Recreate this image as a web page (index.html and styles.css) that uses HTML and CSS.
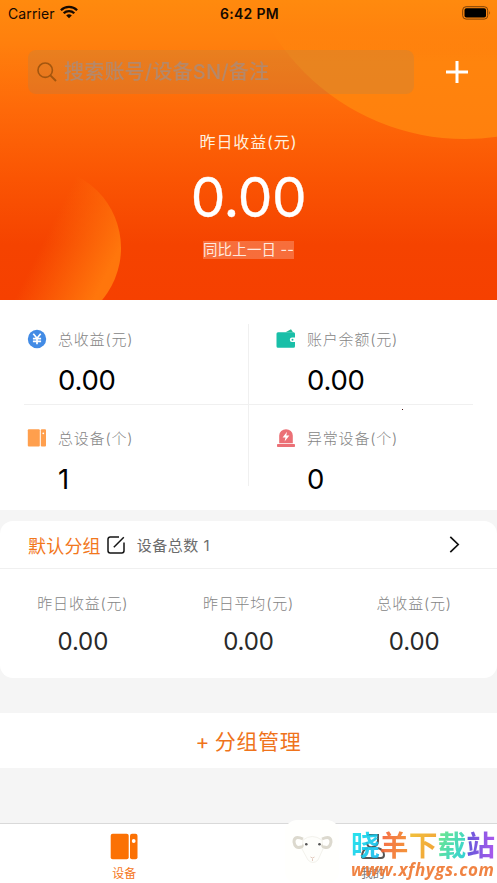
FILE: index.html
```html
<!DOCTYPE html>
<html lang="zh-CN">
<head>
<meta charset="utf-8">
<title>设备</title>
<link rel="stylesheet" href="styles.css">
</head>
<body>
<div class="app">
  <header class="hero">
    <svg class="hero-art" viewBox="0 0 497 300" aria-hidden="true">
      <defs>
        <linearGradient id="big" gradientUnits="userSpaceOnUse" x1="0" y1="20" x2="0" y2="139"><stop offset="0" stop-color="#ff840d" stop-opacity="0"/><stop offset=".35" stop-color="#ff840d"/><stop offset="1" stop-color="#ff800d"/></linearGradient>
        <linearGradient id="small" gradientUnits="userSpaceOnUse" x1="48" y1="232" x2="112" y2="264"><stop offset="0" stop-color="#ff760c" stop-opacity="0"/><stop offset="1" stop-color="#ff760c"/></linearGradient>
      </defs>
      <circle cx="465" cy="-88" r="227" fill="url(#big)"/>
      <circle cx="40" cy="248" r="81" fill="url(#small)"/>
    </svg>
    <div class="status">
      <div class="carrier"><span>Carrier</span>
        <svg width="18" height="14" viewBox="0 0 18 14" fill="none" stroke="#160900" stroke-width="2.3"><path d="M.9 5.2a11.6 11.6 0 0 1 16.2 0M3.7 8.2a7.6 7.6 0 0 1 10.6 0"/><path d="M9 13.3 6.2 10.5a4 4 0 0 1 5.6 0z" fill="#160900" stroke="none"/></svg>
      </div>
      <b class="clock">6:42 PM</b>
      <svg class="battery" width="29" height="14" viewBox="0 0 29 14"><rect x=".7" y=".7" width="25" height="12.4" rx="3.4" fill="none" stroke="#7d4108"/><rect x="2.5" y="2.3" width="21.5" height="9.2" rx="1.8"/><path d="M27.3 4.8q1.5 2 0 4z" fill="#7d4108"/></svg>
    </div>
    <div class="search-row">
      <div class="search">
        <svg width="20" height="20" viewBox="0 0 20 20" fill="none" stroke="#a3560f" stroke-width="1.6"><circle cx="8.200" cy="8.200" r="7.200"/><path d="m13.400 13.400 5.600 5.600" stroke-width="2"/></svg>
        <span>搜索账号/设备SN/备注</span>
      </div>
      <svg class="add" width="22" height="22" viewBox="0 0 22 22" stroke="#fff" stroke-width="3"><path d="M11 0v22M0 11h22"/></svg>
    </div>
    <div class="income-label">昨日收益(元)</div>
    <div class="income">0.00</div>
    <div class="compare"><span>同比上一日 --</span></div>
  </header>

  <section class="stats">
    <div class="stat">
      <svg viewBox="0 0 20 20"><circle cx="10" cy="10" r="9.200" fill="#428be5"/><path d="m6.300 4.800 3.700 4.400 3.700-4.400M10 9v6.300M5.900 9.700h8.200M5.900 12.300h8.200" fill="none" stroke="#fff" stroke-width="1.700"/></svg>
      <div><span class="stat-label">总收益(元)</span><div class="stat-value">0.00</div></div>
    </div>
    <div class="stat">
      <svg viewBox="0 0 20 20"><path d="M9.500 3.200 15 .3l2 2.900z" fill="#22b996"/><path d="M2 3.300h15.500a1.500 1.500 0 0 1 1.500 1.500v3.700h-3a2.200 2.200 0 0 0 0 4.400h3v4.300a1.500 1.500 0 0 1-1.500 1.500H2A1.500 1.500 0 0 1 .5 17.200V4.800A1.500 1.500 0 0 1 2 3.300z" fill="#19bfa8"/><circle cx="16.500" cy="10.700" r="1" fill="#19bfa8"/></svg>
      <div><span class="stat-label">账户余额(元)</span><div class="stat-value">0.00</div></div>
    </div>
    <div class="stat">
      <svg viewBox="0 0 20 20" fill="#ff9f4d"><rect x=".8" y="1.300" width="12" height="17.200" rx="1"/><rect x="13.800" y="1.300" width="5.200" height="17.200" rx="1"/><circle cx="16.300" cy="5.300" r=".9" fill="#fff"/></svg>
      <div><span class="stat-label">总设备(个)</span><div class="stat-value">1</div></div>
    </div>
    <div class="stat">
      <svg viewBox="0 0 20 20"><path d="M3.200 15.300V7.500a6.800 6.300 0 0 1 13.600 0v7.800z" fill="#eb7076"/><rect x="1" y="16" width="18" height="3" rx=".8" fill="#eb7076"/><path d="M11 3.800 6.600 9.500h2.900l-.9 3.900 4.800-5.900h-3.100z" fill="#fff"/></svg>
      <div><span class="stat-label">异常设备(个)</span><div class="stat-value">0</div></div>
    </div>
    <i class="speck"></i>
  </section>

  <section class="group">
    <div class="group-head">
      <span class="group-name">默认分组</span>
      <svg class="edit" width="18" height="18" viewBox="0 0 18 18" fill="none" stroke="#151515" stroke-width="1.500"><path d="M12 1H3.200A2.200 2.200 0 0 0 1 3.200v11.600A2.200 2.200 0 0 0 3.200 17h11.600a2.200 2.200 0 0 0 2.200-2.200V6.500M6.800 11.200 16.800 1.200"/></svg>
      <span class="group-count">设备总数 1</span>
      <svg class="chevron" width="11" height="17" viewBox="0 0 11 17" fill="none" stroke="#111" stroke-width="1.700"><path d="m1.300.9 7.900 7.600-7.900 7.600"/></svg>
    </div>
    <div class="group-data">
      <div><span class="data-label">昨日收益(元)</span><div class="data-value">0.00</div></div>
      <div><span class="data-label">昨日平均(元)</span><div class="data-value">0.00</div></div>
      <div><span class="data-label">总收益(元)</span><div class="data-value">0.00</div></div>
    </div>
  </section>

  <div class="manage">+ 分组管理</div>

  <nav class="tabs">
    <div class="tab active">
      <svg width="28" height="27" viewBox="0 0 28 27"><rect x=".7" y=".8" width="18" height="25.500" rx="2" fill="#fb7104"/><rect x="20" y=".8" width="7.500" height="25.500" rx="2" fill="#fb7104"/><circle cx="23.700" cy="8" r="1.900" fill="#fff"/></svg>
      <span>设备</span>
    </div>
    <div class="tab">
      <svg width="28" height="27" viewBox="0 0 28 27" fill="none" stroke="#555" stroke-width="2"><path d="M8 2h11v6q0 5-5.500 6T8 9M9 15q-6 1-6 9 0 1 2 1h17q3 0 3-3 0-5-6-7"/></svg>
      <span>我的</span>
    </div>
  </nav>

  <div class="mark">
    <svg width="56" height="63" viewBox="0 0 56 63"><rect x="1" width="54" height="63" rx="12" fill="#fffffd"/><path d="M19 20q9-7 19 0l1 9-5 11q-5 5-10 0l-6-11z" fill="#fefefb" stroke="#f3f2ec"/><g fill="none" stroke="#dcd9ce" stroke-width="3"><path d="M19 19q-9-4-9 3 1 7 7 5 2-1 1-2"/><path d="M38 19q9-4 9 3-1 7-7 5-2-1-1-2"/></g><circle cx="22.300" cy="24.300" r="1.300" fill="#555"/><circle cx="35.500" cy="24.300" r="1.300" fill="#555"/><path d="M26.500 37q2 2 4 0M28.500 38.500v2.500" fill="none" stroke="#e2cabe"/></svg>
    <div class="mark-text">
      <div class="mark-name"><span class="c1">晓</span><span class="c2">羊</span><span class="c3">下</span><span class="c4">载</span><span class="c5">站</span></div>
      <div class="mark-url">www.xfhygs.com</div>
    </div>
  </div>
</div>
</body>
</html>
```
FILE: styles.css
```css
* { box-sizing: border-box; }
body { margin: 0; font-family: Inter, "Noto Sans CJK SC", sans-serif; background: #f5f5f5; }
svg { display: block; flex: none; }
.app { position: relative; width: 497px; height: 883px; overflow: hidden; display: flex; flex-direction: column; }

.hero { position: relative; height: 300px; flex: none; overflow: hidden; color: #fff; background: linear-gradient(180deg, #ff8a0e 0, #ff800d 42px, #fe6909 110px, #fa5503 178px, #f54300 245px, #f64000 300px); }
.hero-art { position: absolute; inset: 0; width: 497px; height: 300px; }
.hero > div { position: relative; }
.status { height: 26px; padding: 0 6px 0 8px; display: grid; grid-template-columns: 1fr auto 1fr; align-items: center; color: #160900; }
.carrier { display: flex; align-items: center; gap: 6px; font-size: 14px; letter-spacing: .1px; }
.carrier svg { margin: -3px 0 0 -1px; }
.clock { font-size: 14px; font-weight: 600; letter-spacing: .3px; }
.battery { justify-self: end; margin-top: -1px; }
.search-row { margin-top: 24px; padding: 0 28px; display: flex; align-items: center; justify-content: space-between; }
.search { width: 386px; height: 44px; border-radius: 8px; background: rgba(143, 135, 105, .2); padding: 0 9px; display: flex; align-items: center; gap: 7px; }
.search span { font-size: 20px; font-weight: 500; line-height: 44px; color: #b5886a; letter-spacing: .2px; filter: blur(.6px); white-space: nowrap; }
.add { margin-right: 1px; }
.income-label { margin-top: 36px; height: 24px; line-height: 24px; text-align: center; font-size: 16px; letter-spacing: .9px; color: #fff0df; }
.income { margin-top: 18px; height: 52px; line-height: 50px; text-align: center; font-size: 55px; letter-spacing: -.4px; font-weight: 400; -webkit-text-stroke: .3px #fff; }
.compare { margin-top: 17px; display: flex; justify-content: center; font-size: 14.500px; letter-spacing: .15px; }
.compare span { height: 18px; line-height: 17px; background: rgba(255, 255, 255, .23); color: #ffe9df; white-space: nowrap; }

.stats { position: relative; flex: none; height: 210px; padding: 6px 24px 0; display: grid; grid-template-columns: 225px 224px; grid-template-rows: 99px 98px; background: #fff; }
.stat { display: flex; gap: 11px; padding: 23px 0 0 3px; }
.stat > svg { width: 20px; height: 20px; }
.stat:nth-child(2), .stat:nth-child(4) { padding-left: 27px; }
.stat:nth-child(-n+2) { border-bottom: 1px solid #f0f0f0; }
.stat:nth-child(odd) { background: linear-gradient(#f0f0f0, #f0f0f0) right 18px / 1px 100% no-repeat; }
.stat:nth-child(3) { background-position: right -17px; }
.stat-label { display: block; height: 21px; line-height: 21px; font-size: 15px; letter-spacing: .8px; font-weight: 300; color: #858585; white-space: nowrap; }
.stat-value { margin-top: 14px; line-height: 32px; font-size: 27.500px; letter-spacing: -.2px; color: #000; }
.speck { position: absolute; left: 402px; top: 109px; width: 1px; height: 1px; background: #411; }

.group { flex: none; margin-top: 11px; height: 157px; border-radius: 13px; background: #fff; }
.group-head { height: 48px; display: flex; align-items: center; padding: 0 37px 0 28px; border-bottom: 1px solid #f0f0f0; }
.group-name { font-size: 18px; letter-spacing: .2px; color: #f2771c; }
.edit { margin-left: 6px; }
.group-count { margin-left: 12px; font-size: 15px; color: #6c6c6c; letter-spacing: .5px; }
.chevron { margin-left: auto; }
.group-data { display: grid; grid-template-columns: repeat(3, 1fr); text-align: center; padding-top: 24px; }
.data-label { display: block; height: 22px; line-height: 22px; font-size: 15px; letter-spacing: .8px; font-weight: 300; color: #858585; }
.data-value { margin-top: 12px; line-height: 30px; font-size: 24px; letter-spacing: -.1px; color: #292929; }

.manage { flex: none; margin-top: 35px; height: 55px; line-height: 57px; text-align: center; font-size: 21px; letter-spacing: .7px; word-spacing: -2px; color: #ef731b; background: #fff; }
.tabs { margin-top: auto; flex: none; height: 60px; display: grid; grid-template-columns: 1fr 1fr; background: #fff; border-top: 1px solid #d9d9d9; }
.tab { display: flex; flex-direction: column; align-items: center; padding-top: 9px; font-size: 12px; color: #777; }
.tab span { line-height: 18px; margin-top: 5px; }
.tab.active { color: #f5771b; }

.mark { position: absolute; left: 284px; top: 820px; display: flex; gap: 11px; }
.mark-text { padding-top: 10px; opacity: .9; }
.mark-name { height: 32px; line-height: 32px; font-size: 28.800px; font-weight: 700; white-space: nowrap; }
.mark-name span { color: transparent; background-clip: text; -webkit-background-clip: text; }
.c1 { background-image: linear-gradient(120deg, #10e5eb, #18b5ed); }
.c2 { background-image: linear-gradient(100deg, #f45c38, #f28e24); }
.c3 { background-image: linear-gradient(120deg, #efbd28, #f29422); }
.c4 { background-image: linear-gradient(120deg, #67e778, #16cbdb); }
.c5 { background-image: linear-gradient(90deg, #5147d4, #a448ed); }
.mark-url { font: italic 700 17px/15px "Open Sans", sans-serif; letter-spacing: .6px; color: #ef762f; white-space: nowrap; }
```
